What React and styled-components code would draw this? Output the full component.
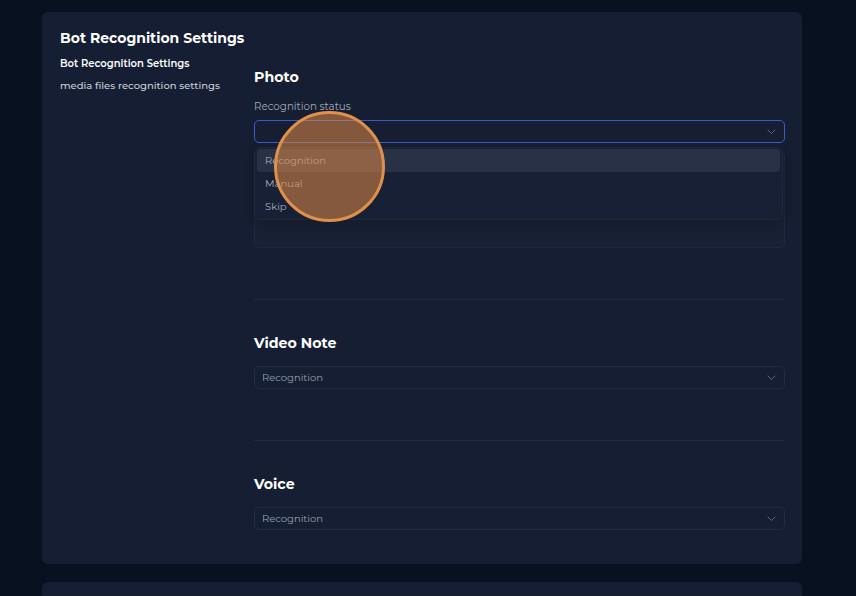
import React from 'react'
import styled, { createGlobalStyle } from 'styled-components'

const GlobalStyle = createGlobalStyle`
  html, body {
    margin: 0;
    padding: 0;
    background: #08111f;
    font-family: Montserrat, Inter, "Open Sans", sans-serif;
    color: #ffffff;
    overflow: hidden;
  }
`

const Page = styled.div`
  position: relative;
  padding: 12px 0 0 42px;
  height: 596px;
  box-sizing: border-box;
`

const Card = styled.section`
  width: 760px;
  box-sizing: border-box;
  background: #151e32;
  border-radius: 6px;
  padding: ${p => (p.$empty ? '0' : '17px 17px 34px 18px')};
  height: ${p => (p.$empty ? '60px' : 'auto')};
  margin-bottom: 18px;
`

const Title = styled.h2`
  margin: 0;
  font-size: 14px;
  line-height: 18px;
  font-weight: 700;
`

const Body = styled.div`
  display: grid;
  grid-template-columns: 194px 1fr;
  margin-top: 6px;
`

const Sidebar = styled.nav`
  display: flex;
  flex-direction: column;
`

const NavItem = styled.div`
  font-size: 10px;
  line-height: 22px;
  font-weight: ${p => (p.$active ? 600 : 500)};
  color: ${p => (p.$active ? '#ffffff' : '#c9cfdb')};
`

const Content = styled.div`
  padding-top: 15px;
  display: flex;
  flex-direction: column;
`

const Section = styled.div`
  display: flex;
  flex-direction: column;
  padding-bottom: ${p => (p.$last ? '0' : '51px')};
  border-bottom: ${p => (p.$last ? 'none' : '1px solid #212b3e')};
  margin-bottom: ${p => (p.$last ? '0' : '34px')};
`

const Heading = styled.h3`
  margin: 0 0 ${p => p.$gap || 10}px;
  font-size: 14.2px;
  line-height: 18px;
  font-weight: 700;
`

const Label = styled.div`
  font-size: 10.3px;
  line-height: 14px;
  color: #a3abba;
  margin-bottom: 6px;
`

const SelectWrap = styled.div`
  position: relative;
`

const SelectBox = styled.div`
  height: 23px;
  box-sizing: border-box;
  border: 1px solid ${p => (p.$focus ? '#3c5dc0' : '#232d41')};
  border-radius: 5px;
  display: flex;
  align-items: center;
  justify-content: space-between;
  padding: 0 8px 0 7px;
  font-size: 10px;
  color: #98a1b2;
`

const Chevron = () => (
  <svg width="9" height="6" viewBox="0 0 9 6" fill="none">
    <path d="M1 1l3.5 3.5L8 1" stroke="#5f687b" strokeWidth="1" strokeLinecap="round" strokeLinejoin="round" />
  </svg>
)

const Menu = styled.div`
  position: absolute;
  top: 27px;
  left: 0;
  right: 2px;
  z-index: 5;
  background: #172035;
  border: 1px solid #1e283b;
  border-radius: 6px;
  padding: 1px 2px 1px 2px;
  box-shadow: 0 4px 10px rgba(0, 0, 0, 0.2);
`

const MenuItem = styled.div`
  height: 23px;
  display: flex;
  align-items: center;
  padding-left: 8px;
  border-radius: 4px;
  font-size: 10px;
  color: #a7aebd;
  background: ${p => (p.$active ? '#283146' : 'transparent')};
`

const TextArea = styled.div`
  margin-top: 8px;
  height: 97px;
  box-sizing: border-box;
  border: 1px solid #1f293c;
  border-radius: 5px;
  background: linear-gradient(#1b2438, #172034);
`

const ClickMark = styled.div`
  position: absolute;
  left: 274px;
  top: 111px;
  width: 111px;
  height: 111px;
  box-sizing: border-box;
  border-radius: 50%;
  border: 3px solid #e0904b;
  background: rgba(224, 136, 70, 0.55);
  z-index: 10;
  pointer-events: none;
`

const Select = ({ value, focus, children }) => (
  <SelectWrap>
    <SelectBox $focus={focus}>
      <span>{value}</span>
      <Chevron />
    </SelectBox>
    {children}
  </SelectWrap>
)

export default function App() {
  return (
    <>
      <GlobalStyle />
      <Page>
        <Card>
          <Title>Bot Recognition Settings</Title>
          <Body>
            <Sidebar>
              <NavItem $active>Bot Recognition Settings</NavItem>
              <NavItem>media files recognition settings</NavItem>
            </Sidebar>
            <Content>
              <Section>
                <Heading $gap={14}>Photo</Heading>
                <Label>Recognition status</Label>
                <Select focus value="">
                  <Menu>
                    <MenuItem $active>Recognition</MenuItem>
                    <MenuItem>Manual</MenuItem>
                    <MenuItem>Skip</MenuItem>
                  </Menu>
                </Select>
                <TextArea />
              </Section>
              <Section>
                <Heading $gap={14}>Video Note</Heading>
                <Select value="Recognition" />
              </Section>
              <Section $last>
                <Heading $gap={14}>Voice</Heading>
                <Select value="Recognition" />
              </Section>
            </Content>
          </Body>
        </Card>
        <Card $empty />
        <ClickMark />
      </Page>
    </>
  )
}
